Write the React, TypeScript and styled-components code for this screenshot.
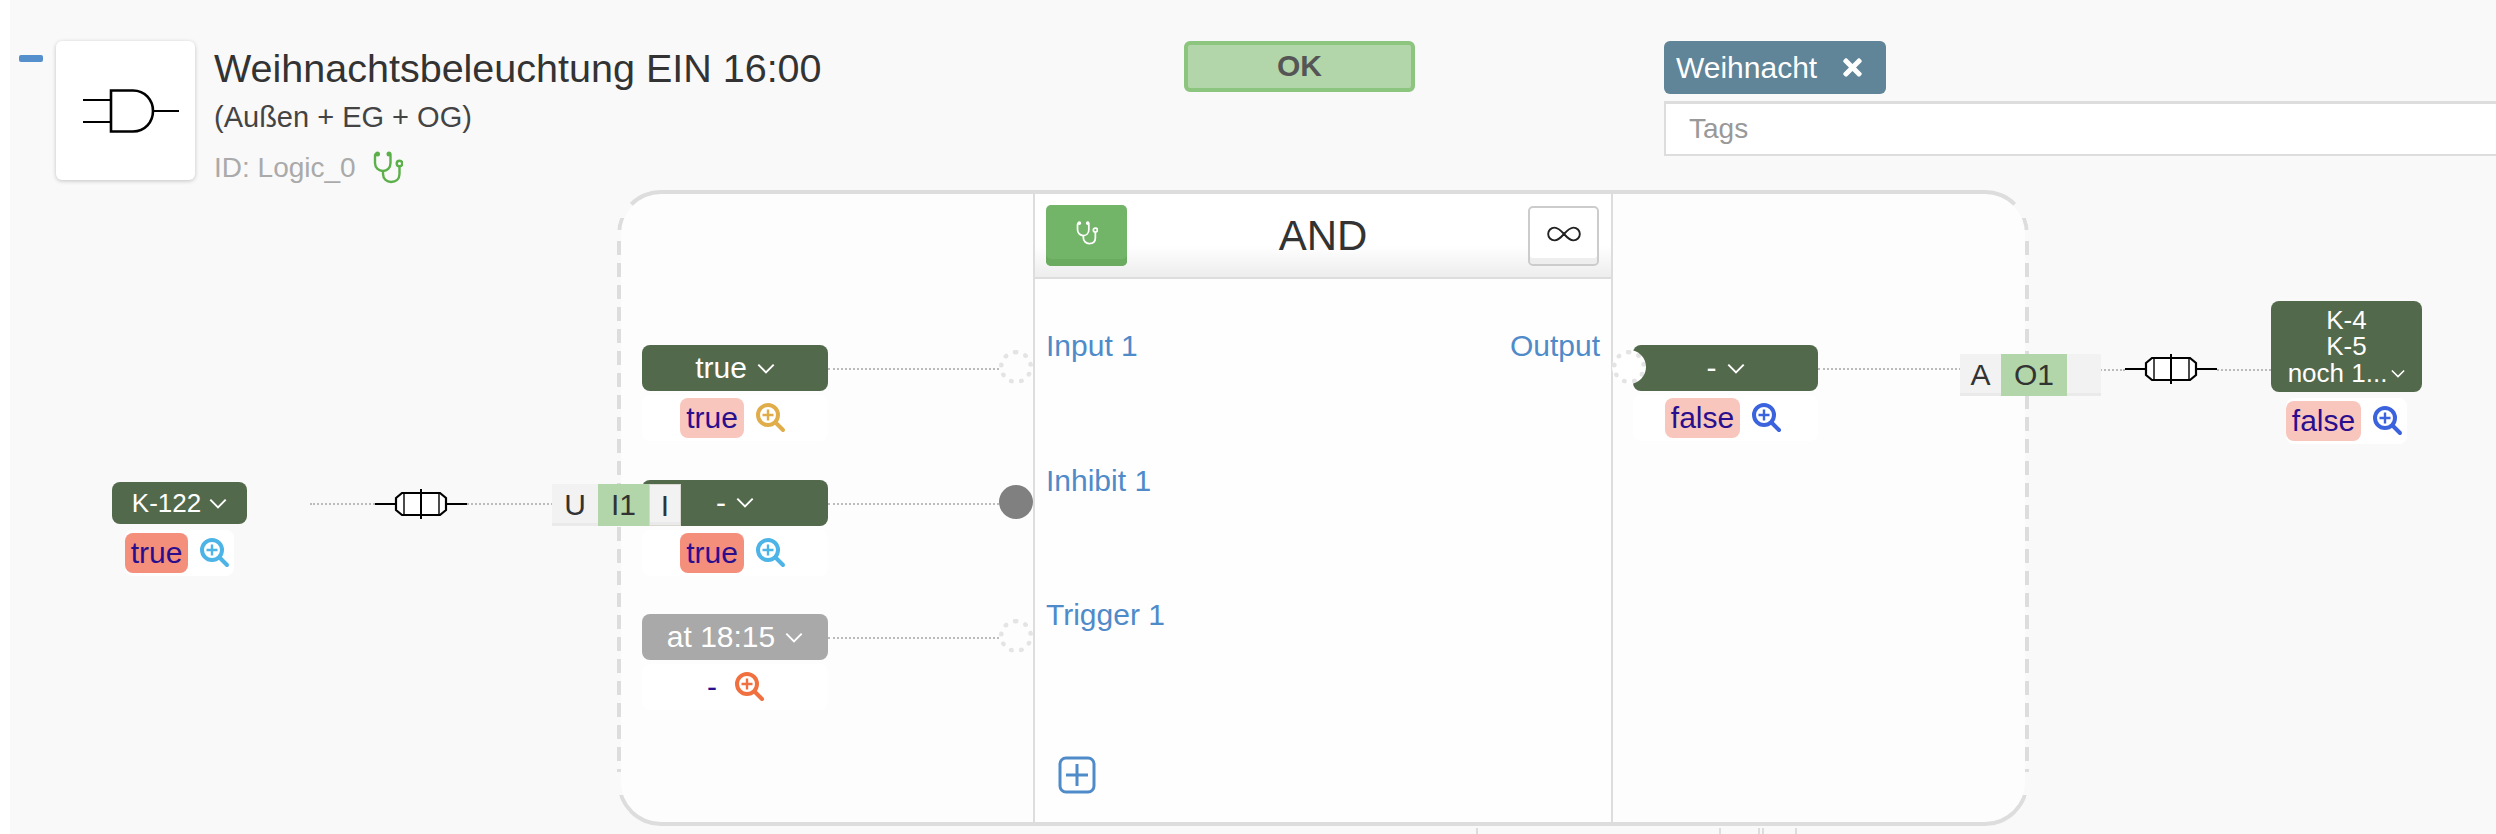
import React from 'react';
import styled, { createGlobalStyle } from 'styled-components';
import { FaTimes } from 'react-icons/fa';
import { Infinity as InfinityIcon } from 'lucide-react';

const GlobalStyle = createGlobalStyle`
  html, body {
    margin: 0;
    height: 834px;
    overflow: hidden;
    background: #fff;
    font-family: "Liberation Sans", Arial, sans-serif;
    color: #333;
  }
`;

const Page = styled.div`
  margin-left: 10px;
  height: 834px;
  background: #f9f9f9;
`;

/* header */
const Header = styled.header`
  display: flex;
  align-items: flex-start;
  height: 190px;
  padding: 41px 0 0 9px;
  box-sizing: border-box;
`;

const Collapse = styled.div`
  width: 24px;
  height: 7px;
  margin: 14px 13px 0 0;
  border-radius: 2px;
  background: #5590cc;
`;

const BlockCard = styled.div`
  display: flex;
  align-items: center;
  justify-content: center;
  box-sizing: border-box;
  width: 139px;
  height: 139px;
  padding-left: 11px;
  border-radius: 6px;
  background: #fff;
  box-shadow: 0 1px 4px rgba(0, 0, 0, 0.22);
`;

const TitleColumn = styled.div`
  width: 970px;
  margin-left: 19px;
`;

const Title = styled.h1`
  margin: 4px 0 0;
  font-size: 39.5px;
  line-height: 46px;
  font-weight: 400;
  color: #333;
`;

const Subtitle = styled.div`
  margin-top: 9px;
  font-size: 29px;
  line-height: 34px;
  color: #444;
`;

const IdLine = styled.div`
  display: flex;
  align-items: center;
  gap: 17px;
  margin-top: 17px;
  font-size: 28px;
  line-height: 32px;
  color: #aaa;
`;

const OkBadge = styled.div`
  box-sizing: border-box;
  width: 231px;
  height: 51px;
  border: 4px solid #8cc57e;
  border-radius: 6px;
  background: #b2d6a9;
  font-size: 30px;
  font-weight: 700;
  line-height: 42px;
  text-align: center;
  color: #555;
`;

const TagColumn = styled.div`
  flex: 1;
  margin: 0 -10px 0 249px;
`;

const Tag = styled.div`
  display: flex;
  align-items: center;
  justify-content: space-between;
  box-sizing: border-box;
  width: 222px;
  height: 53px;
  padding: 0 20px 0 12px;
  border-radius: 6px;
  background: #608498;
  font-size: 30px;
  color: #fff;
`;

const TagInput = styled.input`
  display: block;
  box-sizing: border-box;
  width: 100%;
  height: 55px;
  margin-top: 7px;
  padding: 0 0 0 23px;
  border: 2px solid #ddd;
  border-top-width: 3px;
  border-radius: 0;
  outline: none;
  background: #fff;
  font-family: inherit;
  font-size: 28px;
  &::placeholder {
    color: #999;
    opacity: 1;
  }
`;

/* diagram */
const Diagram = styled.div`
  position: relative;
  display: grid;
  grid-template-columns: 607px 1412px 1fr;
  grid-template-rows: 636px 8px;
`;

const Outside = styled.div<{ $top: number; $left?: number }>`
  display: flex;
  align-items: flex-start;
  padding: ${(p) => p.$top}px 0 0 ${(p) => p.$left ?? 0}px;
`;

const dashes = 'repeating-linear-gradient(#ddd 0 14px, transparent 14px 22px)';
const solid = 'linear-gradient(#000, #000)';

/* the outline's dash rhythm is longer than what a dashed border gives */
const LogicBlock = styled.div`
  position: relative;
  display: grid;
  grid-template-columns: 412px 580px 1fr;
  box-sizing: border-box;
  border: 4px solid;
  border-color: #ddd transparent;
  border-radius: 44px;
  background: #fdfdfd;
  background-clip: padding-box;

  &::before {
    content: '';
    position: absolute;
    top: 47px;
    bottom: 50px;
    left: -4px;
    right: -4px;
    background: ${dashes} left / 4px 100% no-repeat, ${dashes} right / 4px 100% no-repeat;
  }

  &::after {
    content: '';
    position: absolute;
    inset: -4px;
    border: 4px solid #ddd;
    border-radius: 44px;
    -webkit-mask:
      ${solid} left 28px / 16px 12px no-repeat,
      ${solid} right 28px / 16px 12px no-repeat,
      ${solid} left bottom 13px / 16px 18px no-repeat,
      ${solid} right bottom 13px / 16px 18px no-repeat;
  }
`;

const PortColumn = styled.div<{ $left: number }>`
  padding: 151px 0 0 ${(p) => p.$left}px;
`;

const PortRow = styled.div`
  position: relative;
  display: flex;
  align-items: flex-start;
  height: 134.5px;
`;

const Node = styled.div<{ $width: number }>`
  display: flex;
  flex: none;
  flex-direction: column;
  align-items: center;
  width: ${(p) => p.$width}px;
`;

const Dropdown = styled.div<{ $small?: boolean; $muted?: boolean; $height?: number }>`
  display: flex;
  align-items: center;
  justify-content: center;
  gap: ${(p) => (p.$small ? 8 : 10)}px;
  box-sizing: border-box;
  width: 100%;
  height: ${(p) => p.$height ?? 46}px;
  border-radius: 8px;
  background: ${(p) => (p.$muted ? '#a9a9a9' : '#53694c')};
  font-size: ${(p) => (p.$small ? 26 : 30)}px;
  color: #fff;
`;

const MultiDropdown = styled(Dropdown)`
  flex-direction: column;
  gap: 0;
  line-height: 26.5px;
`;

const LastLine = styled.span`
  display: flex;
  align-items: center;
  gap: 4px;
`;

const ValueRow = styled.div<{ $compact?: boolean }>`
  display: flex;
  align-items: center;
  justify-content: center;
  gap: 12px;
  box-sizing: border-box;
  width: ${(p) => (p.$compact ? 'auto' : '100%')};
  height: 46px;
  margin-top: ${(p) => (p.$compact ? 6 : 4)}px;
  padding-right: 4px;
  border-radius: 8px;
  background: #fff;
`;

const Value = styled.span<{ $state?: 'active' | 'soft' }>`
  padding: 0 6px;
  border-radius: 8px;
  background: ${(p) =>
    p.$state === 'active' ? '#f48f7c' : p.$state === 'soft' ? '#f8c6bc' : 'transparent'};
  font-size: 30px;
  line-height: 40px;
  color: #2a0e8e;
`;

const Wire = styled.div<{ $width?: number; $gap?: number; $top?: number }>`
  flex: ${(p) => (p.$width ? `0 0 ${p.$width}px` : 1)};
  margin: ${(p) => p.$top ?? 23}px 0 0 ${(p) => p.$gap ?? 0}px;
  border-top: 2px dotted #bbb;
`;

const PortCircle = styled.div<{ $solid?: boolean }>`
  flex: none;
  box-sizing: border-box;
  width: 34px;
  height: 34px;
  margin-top: 5px;
  border: 5px dotted #e4e4e4;
  border-radius: 50%;
  background: #fdfdfd;
  ${(p) => p.$solid && 'border: 0; background: #808080;'}
`;

const OutputCircle = styled(PortCircle)`
  position: absolute;
  top: 0;
  left: -21px;
  background: #fff;
`;

const Fuse = styled.svg<{ $top: number }>`
  flex: none;
  margin-top: ${(p) => p.$top}px;
`;

const CenterPanel = styled.div`
  display: flex;
  flex-direction: column;
  border-left: 2px solid #ddd;
  border-right: 2px solid #ddd;
  background: #fefefe;
`;

const PanelHeader = styled.div`
  display: flex;
  align-items: center;
  justify-content: space-between;
  box-sizing: border-box;
  height: 85px;
  padding: 0 12px 0 11px;
  border-bottom: 2px solid #ddd;
  background: linear-gradient(#fff 62%, #ededed);
`;

const DebugButton = styled.div`
  display: flex;
  align-items: center;
  justify-content: center;
  box-sizing: border-box;
  width: 81px;
  height: 61px;
  padding-bottom: 6px;
  border-radius: 5px;
  background: #72b568;
  box-shadow: inset 0 -7px 0 #6aab5f;
`;

const PanelTitle = styled.div`
  margin-right: 9px;
  font-size: 42px;
  color: #333;
`;

const LoopButton = styled.div`
  display: flex;
  align-items: center;
  justify-content: center;
  box-sizing: border-box;
  width: 71px;
  height: 60px;
  padding-bottom: 4px;
  border: 2px solid #ccc;
  border-radius: 5px;
  background: #fff;
  box-shadow: inset 0 -6px 0 #eee;
  color: #222;
`;

const PanelBody = styled.div`
  display: flex;
  justify-content: space-between;
  padding: 50px 11px 0 11px;
`;

const Label = styled.div`
  height: 134.5px;
  font-size: 30px;
  line-height: 34px;
  color: #4f8ac9;
`;

const AddButton = styled.svg`
  display: block;
  margin: 23px 0 0 12px;
`;

const PinGroup = styled.div<{ $left: number; $top: number; $height: number }>`
  position: absolute;
  top: ${(p) => p.$top}px;
  left: ${(p) => p.$left}px;
  z-index: 2;
  display: flex;
  height: ${(p) => p.$height}px;
`;

const Pin = styled.div<{ $width: number; $active?: boolean; $boxed?: boolean }>`
  box-sizing: border-box;
  width: ${(p) => p.$width}px;
  padding-top: 2px;
  background: ${(p) => (p.$active ? '#b2d6a9' : '#f2f2f2')};
  box-shadow: ${(p) => (p.$active ? 'none' : 'inset 0 -3px 0 #eaeaea')};
  border: ${(p) => (p.$boxed ? '1px solid #d8d8d0' : '0')};
  font-size: 30px;
  line-height: 38px;
  text-align: center;
  color: #333;
`;

const TickRow = styled.div`
  display: flex;
  grid-column: 2;
  padding-top: 2px;
`;

const Tick = styled.span<{ $gap: number }>`
  width: 2px;
  height: 6px;
  margin-left: ${(p) => p.$gap}px;
  background: #ddd;
`;

function Chevron({ width = 18 }: { width?: number }) {
  return (
    <svg width={width} height={11} viewBox="0 0 16 10" fill="none">
      <path d="M1 1.5 8 8.5 15 1.5" stroke="#fff" strokeWidth="1.8" />
    </svg>
  );
}

function Magnifier({ color }: { color: string }) {
  return (
    <svg width={30} height={30} viewBox="0 0 30 30" fill="none" stroke={color} strokeLinecap="round">
      <circle cx="12" cy="12" r="10" strokeWidth="4" />
      <path d="M19.5 19.5 27 27" strokeWidth="4" />
      <path d="M12 6.5v11M6.5 12h11" strokeWidth="2.4" strokeLinecap="butt" />
    </svg>
  );
}

function Stethoscope({ color, width, height }: { color: string; width: number; height: number }) {
  return (
    <svg width={width} height={height} viewBox="13 12 30 33" fill="none" stroke={color} strokeWidth="2.4">
      <path d="M17.5 15H16.5Q15 15 15 17V24C15 29 19 32 23 32C27 32 30.5 29 30.5 24V17Q30.5 15 29 15" />
      <path d="M23 32V35C23 40 27 43 31 43C36 43 39.5 40 39.5 35V28" />
      <circle cx="39.5" cy="24.5" r="2.8" />
      <circle cx="17.5" cy="15" r="1.3" fill={color} />
      <circle cx="29" cy="15" r="1.3" fill={color} />
    </svg>
  );
}

function FuseIcon({ top }: { top: number }) {
  return (
    <Fuse $top={top} width={92} height={30} viewBox="0 0 92 30" fill="none" stroke="#000">
      <path d="M0 15H21M71 15H92" strokeWidth="2" />
      <path d="M21 9 27 4H65L71 9V21L65 26H27L21 21Z" fill="#fff" strokeWidth="2.2" />
      <path d="M29 4V26M64 4V26" strokeWidth="1.4" />
      <path d="M46 0V30" strokeWidth="2" />
    </Fuse>
  );
}

function ValueLine({ text, state, color, compact }: { text: string; state?: 'active' | 'soft'; color: string; compact?: boolean }) {
  return (
    <ValueRow $compact={compact}>
      <Value $state={state}>{text}</Value>
      <Magnifier color={color} />
    </ValueRow>
  );
}

export default function App() {
  return (
    <Page>
      <GlobalStyle />
      <Header>
        <Collapse />
        <BlockCard>
          <svg width={96} height={44} viewBox="0 0 96 44" fill="none" stroke="#000">
            <path d="M0 11H28M0 33H28M70 22H96" strokeWidth="2" />
            <path d="M28 1.5H50C62 1.5 70 11 70 22C70 33 62 42.5 50 42.5H28Z" strokeWidth="2.6" />
          </svg>
        </BlockCard>
        <TitleColumn>
          <Title>Weihnachtsbeleuchtung EIN 16:00</Title>
          <Subtitle>(Außen + EG + OG)</Subtitle>
          <IdLine>
            ID: Logic_0
            <Stethoscope color="#5cb04a" width={30} height={33} />
          </IdLine>
        </TitleColumn>
        <OkBadge>OK</OkBadge>
        <TagColumn>
          <Tag>
            Weihnacht
            <FaTimes size={27} />
          </Tag>
          <TagInput placeholder="Tags" />
        </TagColumn>
      </Header>

      <Diagram>
        <Outside $top={292} $left={102}>
          <Node $width={135}>
            <Dropdown $small $height={42}>
              K-122
              <Chevron />
            </Dropdown>
            <ValueLine text="true" state="active" color="#4cb4e6" compact />
          </Node>
          <Wire $width={65} $gap={63} $top={21} />
          <FuseIcon top={7} />
          <Wire $top={21} />
        </Outside>

        <LogicBlock>
          <PortColumn $left={21}>
            <PortRow>
              <Node $width={186}>
                <Dropdown>
                  true
                  <Chevron />
                </Dropdown>
                <ValueLine text="true" state="soft" color="#e0ad4a" />
              </Node>
              <Wire />
              <PortCircle />
            </PortRow>
            <PortRow>
              <Node $width={186}>
                <Dropdown>
                  -
                  <Chevron />
                </Dropdown>
                <ValueLine text="true" state="active" color="#4cb4e6" />
              </Node>
              <Wire />
              <PortCircle $solid />
            </PortRow>
            <PortRow>
              <Node $width={186}>
                <Dropdown $muted>
                  at 18:15
                  <Chevron />
                </Dropdown>
                <ValueLine text="-" color="#f0703f" />
              </Node>
              <Wire />
              <PortCircle />
            </PortRow>
          </PortColumn>

          <CenterPanel>
            <PanelHeader>
              <DebugButton>
                <Stethoscope color="#fff" width={22} height={24} />
              </DebugButton>
              <PanelTitle>AND</PanelTitle>
              <LoopButton>
                <InfinityIcon size={38} strokeWidth={1.2} />
              </LoopButton>
            </PanelHeader>
            <PanelBody>
              <div>
                <Label>Input 1</Label>
                <Label>Inhibit 1</Label>
                <Label>Trigger 1</Label>
                <AddButton width={38} height={38} viewBox="0 0 38 38" fill="none" stroke="#4f8ac9" strokeWidth="3">
                  <rect x="2" y="2" width="34" height="34" rx="6" />
                  <path d="M19 8V30M8 19H30" />
                </AddButton>
              </div>
              <Label>Output</Label>
            </PanelBody>
          </CenterPanel>

          <PortColumn $left={20}>
            <PortRow>
              <OutputCircle />
              <Node $width={185}>
                <Dropdown>
                  -
                  <Chevron />
                </Dropdown>
                <ValueLine text="false" state="soft" color="#3a63dd" />
              </Node>
              <Wire />
            </PortRow>
          </PortColumn>
        </LogicBlock>

        <Outside $top={111}>
          <Wire $width={96} $top={68} />
          <FuseIcon top={53} />
          <Wire $width={54} $top={68} />
          <Node $width={151}>
            <MultiDropdown $small $height={91}>
              <span>K-4</span>
              <span>K-5</span>
              <LastLine>
                noch 1...
                <Chevron width={14} />
              </LastLine>
            </MultiDropdown>
            <ValueLine text="false" state="soft" color="#3a63dd" compact />
          </Node>
        </Outside>

        <TickRow>
          <Tick $gap={859} />
          <Tick $gap={241} />
          <Tick $gap={37} />
          <Tick $gap={2} />
          <Tick $gap={31} />
        </TickRow>

        <PinGroup $left={542} $top={294} $height={42}>
          <Pin $width={46}>U</Pin>
          <Pin $width={51} $active>I1</Pin>
          <Pin $width={32} $boxed>I</Pin>
        </PinGroup>
        <PinGroup $left={1950} $top={164} $height={42}>
          <Pin $width={41}>A</Pin>
          <Pin $width={66} $active>O1</Pin>
          <Pin $width={34} />
        </PinGroup>
      </Diagram>
    </Page>
  );
}
